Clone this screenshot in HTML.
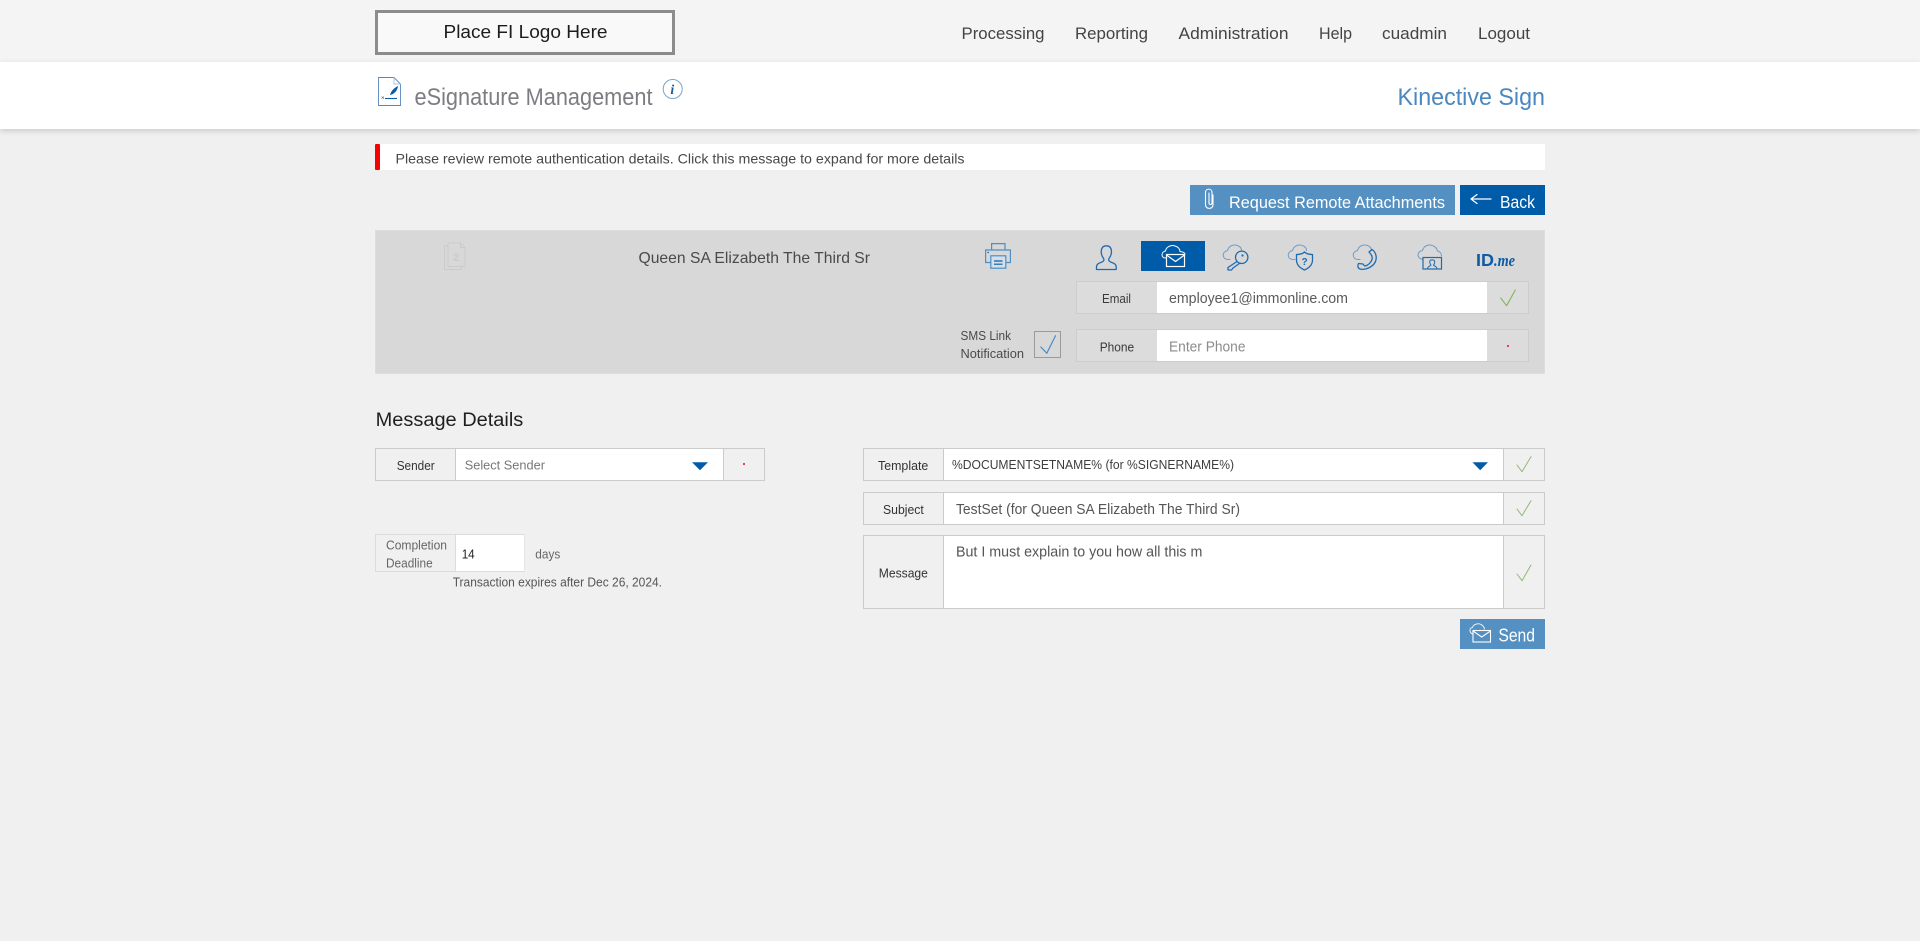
<!DOCTYPE html>
<html lang="en">
<head>
<meta charset="utf-8">
<title>eSignature Management</title>
<style>
html,body{margin:0;padding:0;width:1920px;height:941px;overflow:hidden;background:#f0f0f0}
#top{position:absolute;left:0;top:0;width:1920px;height:62px;background:#f4f4f4}
#band{position:absolute;left:0;top:62px;width:1920px;height:67px;background:#fff;box-shadow:0 2px 6px rgba(0,0,0,.16)}
svg{position:absolute;left:0;top:0;display:block}
text{font-family:"Liberation Sans",sans-serif;white-space:pre}
.nav{font-size:17px;fill:#444}
.lbl{font-size:13px;fill:#3a3a3a}
.val{font-size:15px;fill:#5a5a5a}
.line{fill:none;stroke-linecap:round;stroke-linejoin:round}
</style>
</head>
<body>
<div id="top"></div>
<div id="band"></div>
<svg width="1920" height="941" viewBox="0 0 1920 941" xmlns="http://www.w3.org/2000/svg">
<!-- logo -->
<rect x="376.5" y="11.5" width="297" height="42" fill="#f9f9f9" stroke="#8c8c8c" stroke-width="3"/>
<text x="443.5" y="38" font-size="18" fill="#1c1c1c" textLength="164" lengthAdjust="spacingAndGlyphs">Place FI Logo Here</text>
<!-- nav -->
<text class="nav" x="961.5" y="39" textLength="83" lengthAdjust="spacingAndGlyphs">Processing</text>
<text class="nav" x="1075" y="39" textLength="73" lengthAdjust="spacingAndGlyphs">Reporting</text>
<text class="nav" x="1178.5" y="39" textLength="110" lengthAdjust="spacingAndGlyphs">Administration</text>
<text class="nav" x="1319" y="39" textLength="33" lengthAdjust="spacingAndGlyphs">Help</text>
<text class="nav" x="1382" y="39" textLength="65" lengthAdjust="spacingAndGlyphs">cuadmin</text>
<text class="nav" x="1478" y="39" textLength="52" lengthAdjust="spacingAndGlyphs">Logout</text>
<!-- title band -->
<g fill="none">
<path d="M378.5 77.5H394L400.5 84V105.5H378.5Z" stroke="#5a86bd" stroke-width=".9"/>
<path d="M394 77.5V84H400.5" stroke="#a9c3de" stroke-width=".9"/>
<path d="M390 95C391 91 394 88 398 86C397.5 90 395 94 390 95Z" fill="#0a5da8"/>
<path d="M385 98.5H397" stroke="#0a5da8" stroke-width="1.1"/>
<path d="M381.5 96.5L384 98.8M384 96.5L381.5 98.8" stroke="#777" stroke-width=".7"/>
</g>
<text x="414.5" y="105" font-size="24" fill="#7c7c82" textLength="238" lengthAdjust="spacingAndGlyphs">eSignature Management</text>
<circle cx="672.7" cy="89" r="9.5" fill="#fff" stroke="#7ba4cb" stroke-width="1"/>
<text x="670.4" y="94" font-size="14" font-weight="bold" font-style="italic" fill="#1d5a96" style="font-family:'Liberation Serif',serif">i</text>
<text x="1397.5" y="105" font-size="24.5" fill="#4a88bf" textLength="147.5" lengthAdjust="spacingAndGlyphs">Kinective Sign</text>
<!-- alert -->
<rect x="375" y="144" width="1170" height="26" fill="#fff"/>
<rect x="375" y="144" width="5" height="26" rx="1" fill="#f60000"/>
<text x="395.5" y="163.5" font-size="14" fill="#484848" textLength="569" lengthAdjust="spacingAndGlyphs">Please review remote authentication details. Click this message to expand for more details</text>
<!-- buttons -->
<rect x="1190" y="185" width="265" height="30" fill="#5490c1"/>
<rect x="1460" y="185" width="85" height="30" fill="#005ca9"/>
<path class="line" d="M1213 195V205C1213 209.5 1205.5 209.5 1205.5 205V192.5C1205.5 188 1212 188 1212 192.5V203C1212 205 1209 205 1209 203V193" stroke="#fff" stroke-width="1.1"/>
<text x="1229" y="208" font-size="17" fill="#fff" textLength="216" lengthAdjust="spacingAndGlyphs">Request Remote Attachments</text>
<path class="line" d="M1491 199H1471M1477 194.5L1471 199L1477 203.5" stroke="#fff" stroke-width="1.2"/>
<text x="1500" y="208" font-size="17.5" fill="#fff" textLength="35" lengthAdjust="spacingAndGlyphs">Back</text>
<!-- panel -->
<rect x="375.5" y="230.5" width="1169" height="143" fill="#d8d8d8" stroke="#dedede"/>
<!-- doc icon 2 -->
<g fill="none" stroke="#cbcbcb" stroke-width="1">
<path d="M448 243H460.5L465 247.5V266.5H448Z"/>
<path d="M448 246H444.5V269.5H461.5V266.5"/>
<path d="M460.5 243V247.5H465"/>
</g>
<text x="453" y="261" font-size="11" font-weight="bold" fill="#cbcbcb">2</text>
<text x="638.5" y="263" font-size="16" fill="#4a4a4a" textLength="231.5" lengthAdjust="spacingAndGlyphs">Queen SA Elizabeth The Third Sr</text>
<!-- printer -->
<g fill="none" stroke="#4f8fc6" stroke-width="1.2">
<path d="M991.6 250V243.6H1005V250"/>
<path d="M990.5 262.5H985.6V250H1010.4V262.5H1005.7" fill="#d8d8d8"/>
<rect x="990.8" y="255.8" width="15" height="12.4" fill="#d3dfe9"/>
<path d="M994 261H1002.5M994 264.2H1002.5" stroke="#0a5da8"/>
<path d="M987.5 252.5H989" stroke="#0a5da8"/>
</g>
<!-- person -->
<path class="line" d="M1096.5 269.5V267C1096.5 264 1099 263 1102 262C1104 261.2 1104.2 259.8 1103.6 258.5C1101.6 256 1101 252.5 1101.4 250C1102 247 1104 245.8 1106.3 245.8C1108.8 245.8 1110.8 247 1111.3 250C1111.7 252.5 1111 256 1109 258.5C1108.4 259.8 1108.6 261.2 1110.6 262C1113.6 263 1116.2 264 1116.2 267V269.5Z" fill="none" stroke="#1f6bb0" stroke-width="1.3"/>
<!-- selected mail tab -->
<rect x="1141" y="241" width="64" height="30" fill="#005ca9"/>
<path class="line" d="M1166 258H1165C1161 258 1161 251.5 1165.5 251C1166 247 1171 244.5 1175 246C1178 246.8 1179.8 249 1180 251.5C1182.5 251.8 1184.5 252.8 1185 254" fill="none" stroke="#fff" stroke-width="1"/>
<rect x="1166.5" y="254.5" width="18" height="12" fill="#005ca9" stroke="#fff" stroke-width="1.2"/>
<path class="line" d="M1166.5 255L1175.5 261.5L1184.5 255" fill="none" stroke="#fff" stroke-width="1.2"/>
<!-- key -->
<path class="line" d="M1230 259.5H1228C1222 259.5 1221.5 251.5 1227.5 250.5C1228.5 246 1234 243.5 1238.5 246C1240.5 247 1241.5 248.5 1241.5 250.5" fill="none" stroke="#6f9cc8" stroke-width="1"/>
<circle cx="1241.7" cy="257.3" r="6.2" fill="#d8d8d8" stroke="#1f6bb0" stroke-width="1.3"/>
<circle cx="1242.5" cy="255.5" r="1.1" fill="#1f6bb0"/>
<path class="line" d="M1237 261.5L1228 267.5V270H1231.5L1233 268L1240 263" fill="none" stroke="#1f6bb0" stroke-width="1.3"/>
<!-- shield -->
<path class="line" d="M1295 259.5H1293C1287 259.5 1286.5 251.5 1292.5 250.5C1293.5 246 1299 243.5 1303.5 246C1305.5 247 1306.5 248.5 1306.5 250.5" fill="none" stroke="#6f9cc8" stroke-width="1"/>
<path class="line" d="M1296.5 254.5C1301 254.5 1303 253.5 1304.5 252C1306 253.5 1308.5 254.5 1312.5 254.5V260C1312.5 264.5 1309 268 1304.5 270C1300 268 1296.5 264.5 1296.5 260Z" fill="#d8d8d8" stroke="#1f6bb0" stroke-width="1.3"/>
<text x="1301.5" y="265" font-size="10" font-weight="bold" fill="#1f6bb0">?</text>
<!-- phone -->
<path class="line" d="M1360 259.5H1358C1352 259.5 1351.5 251.5 1357.5 250.5C1358.5 246 1364 243.5 1368.5 246C1370.5 247 1371.5 248.5 1371.5 250.5" fill="none" stroke="#6f9cc8" stroke-width="1"/>
<path class="line" d="M1369 252L1372 249.5C1376 252 1377.5 258 1375 262.5C1372.5 267 1365 270.5 1360 269C1357.5 268 1357.5 265.5 1358.5 263.5L1363 264C1364 265 1364 266 1365 266C1368 265.5 1371 262.5 1372 259.5C1372.5 257 1372 255.5 1371 254.5Z" fill="none" stroke="#1f6bb0" stroke-width="1.3"/>
<!-- video -->
<path class="line" d="M1423 259.5C1417 259 1416 251.5 1422.5 250.5C1423.5 246 1429 243.5 1433.5 246C1436 247 1437 249 1437.5 251C1440 251.5 1441.5 253.5 1441.5 256" fill="none" stroke="#6f9cc8" stroke-width="1"/>
<rect x="1423" y="257.5" width="18.5" height="11.5" fill="#d8d8d8" stroke="#1f6bb0" stroke-width="1.2"/>
<path class="line" d="M1427.5 269C1427.5 266.5 1430 266 1431 265.2C1430 263.8 1429.5 262.5 1429.8 261C1430.3 259.5 1434 259.5 1434.6 261C1435 262.5 1434.5 263.8 1433.5 265.2C1434.5 266 1437 266.5 1437 269" fill="none" stroke="#1f6bb0" stroke-width="1"/>
<!-- id.me -->
<text x="1476" y="266" font-size="17.5" font-weight="bold" fill="#0f5ba4" textLength="18" lengthAdjust="spacingAndGlyphs">ID</text>
<text x="1494" y="266" font-size="17" font-style="italic" fill="#0f5ba4" textLength="21" lengthAdjust="spacingAndGlyphs" style="font-family:'Liberation Serif',serif;font-weight:bold">.me</text>
<!-- email row -->
<rect x="1076.5" y="281.5" width="452" height="32" fill="#dcdcdc" stroke="#cdcdcd"/>
<rect x="1157" y="282" width="330" height="31" fill="#fff"/>
<text class="lbl" x="1102" y="303" textLength="29" lengthAdjust="spacingAndGlyphs">Email</text>
<text class="val" x="1169" y="303" textLength="179" lengthAdjust="spacingAndGlyphs">employee1@immonline.com</text>
<path class="line" d="M1500.7 298L1506.6 305.7L1515.3 290" fill="none" stroke="#86b45c" stroke-width="1.1"/>
<!-- phone row -->
<rect x="1076.5" y="329.5" width="452" height="32" fill="#dcdcdc" stroke="#cdcdcd"/>
<rect x="1157" y="330" width="330" height="31" fill="#fff"/>
<text class="lbl" x="1099.7" y="351.5" textLength="34.5" lengthAdjust="spacingAndGlyphs">Phone</text>
<text class="val" x="1169" y="351.5" textLength="76.5" lengthAdjust="spacingAndGlyphs" style="fill:#8c8c8c">Enter Phone</text>
<rect x="1507" y="345" width="2" height="2" fill="#ee3f50"/>
<!-- sms -->
<text class="lbl" x="960.5" y="340" textLength="50.5" lengthAdjust="spacingAndGlyphs" style="fill:#4a4a4a">SMS Link</text>
<text class="lbl" x="960.5" y="358" textLength="63.5" lengthAdjust="spacingAndGlyphs" style="fill:#4a4a4a">Notification</text>
<rect x="1034.5" y="331.5" width="26" height="26" fill="#d8d8d8" stroke="#9a9a9a"/>
<path class="line" d="M1040.8 347L1046.8 353.3L1055.5 335.7" fill="none" stroke="#3f86c6" stroke-width="1.1"/>
<!-- message details -->
<text x="375.6" y="426" font-size="19" fill="#1f1f1f" textLength="147.7" lengthAdjust="spacingAndGlyphs">Message Details</text>
<!-- sender -->
<rect x="375.5" y="448.5" width="389" height="32" fill="#f0f0f0" stroke="#cbcbcb" stroke-width="1"/>
<rect x="456" y="449" width="267" height="31" fill="#fff"/>
<path d="M455.5 449V480M723.5 449V480" stroke="#cbcbcb"/>
<text class="lbl" x="396.7" y="470" textLength="38" lengthAdjust="spacingAndGlyphs" style="fill:#333">Sender</text>
<text x="464.7" y="469.5" font-size="13" fill="#777" textLength="80.3" lengthAdjust="spacingAndGlyphs">Select Sender</text>
<path d="M692 462.3H708L700 470.3Z" fill="#005ca9"/>
<rect x="743" y="463" width="2" height="2" fill="#ee3f50"/>
<!-- completion -->
<rect x="375.5" y="534.5" width="148.5" height="37" fill="#f0f0f0" stroke="#dcdcdc"/>
<rect x="456" y="535" width="68" height="36" fill="#fff"/>
<path d="M455.5 535V571" stroke="#dcdcdc"/>
<text class="lbl" x="386" y="549.3" textLength="61" lengthAdjust="spacingAndGlyphs" style="fill:#666">Completion</text>
<text class="lbl" x="386" y="567.3" textLength="46.7" lengthAdjust="spacingAndGlyphs" style="fill:#666">Deadline</text>
<text x="461.7" y="558.3" font-size="13" fill="#222" textLength="13" lengthAdjust="spacingAndGlyphs">14</text>
<text x="535.3" y="558.3" font-size="13" fill="#666" textLength="25" lengthAdjust="spacingAndGlyphs">days</text>
<text x="452.7" y="586.7" font-size="13" fill="#555" textLength="209.3" lengthAdjust="spacingAndGlyphs">Transaction expires after Dec 26, 2024.</text>
<!-- template -->
<rect x="863.5" y="448.5" width="681" height="32" fill="#f0f0f0" stroke="#cbcbcb"/>
<rect x="944" y="449" width="559" height="31" fill="#fff"/>
<path d="M943.5 449V480M1503.5 449V480" stroke="#cbcbcb"/>
<text class="lbl" x="878" y="470" textLength="50.3" lengthAdjust="spacingAndGlyphs" style="fill:#333">Template</text>
<text x="952" y="469" font-size="13" fill="#3d3d3d" textLength="282" lengthAdjust="spacingAndGlyphs">%DOCUMENTSETNAME% (for %SIGNERNAME%)</text>
<path d="M1472.5 462.3H1488L1480.2 470.3Z" fill="#005ca9"/>
<path class="line" d="M1517 465L1522 471.7L1531 456.7" fill="none" stroke="#93b877" stroke-width="1"/>
<!-- subject -->
<rect x="863.5" y="492.5" width="681" height="32" fill="#f0f0f0" stroke="#cbcbcb"/>
<rect x="944" y="493" width="559" height="31" fill="#fff"/>
<path d="M943.5 493V524M1503.5 493V524" stroke="#cbcbcb"/>
<text class="lbl" x="883" y="514" textLength="40.8" lengthAdjust="spacingAndGlyphs" style="fill:#333">Subject</text>
<text x="956" y="514" font-size="14.5" fill="#555" textLength="284" lengthAdjust="spacingAndGlyphs">TestSet (for Queen SA Elizabeth The Third Sr)</text>
<path class="line" d="M1517 509L1522 515.7L1531 500.7" fill="none" stroke="#93b877" stroke-width="1"/>
<!-- message -->
<rect x="863.5" y="535.5" width="681" height="73" fill="#f0f0f0" stroke="#cbcbcb"/>
<rect x="944" y="536" width="559" height="72" fill="#fff"/>
<path d="M943.5 536V608M1503.5 536V608" stroke="#cbcbcb"/>
<text class="lbl" x="878.8" y="577.3" textLength="49.1" lengthAdjust="spacingAndGlyphs" style="fill:#333">Message</text>
<text x="956" y="556.7" font-size="14.5" fill="#555" textLength="246.4" lengthAdjust="spacingAndGlyphs">But I must explain to you how all this m</text>
<path class="line" d="M1517 574L1522 580.7L1531 565" fill="none" stroke="#93b877" stroke-width="1"/>
<!-- send -->
<rect x="1460" y="619" width="85" height="30" fill="#5490c1"/>
<path class="line" d="M1473 634C1469 633 1469 628 1472.5 627.5C1473 624.5 1478 622.8 1481 624.5C1483 625.5 1484 627 1484.5 629" fill="none" stroke="#e8f0f7" stroke-width="1"/>
<rect x="1473" y="630.5" width="17.5" height="11.5" fill="#5490c1" stroke="#fff" stroke-width="1.1"/>
<path class="line" d="M1473 631L1481.7 637L1490.5 631" fill="none" stroke="#fff" stroke-width="1.1"/>
<text x="1498.4" y="641.5" font-size="18" fill="#fff" textLength="36.6" lengthAdjust="spacingAndGlyphs">Send</text>
</svg>
</body>
</html>
